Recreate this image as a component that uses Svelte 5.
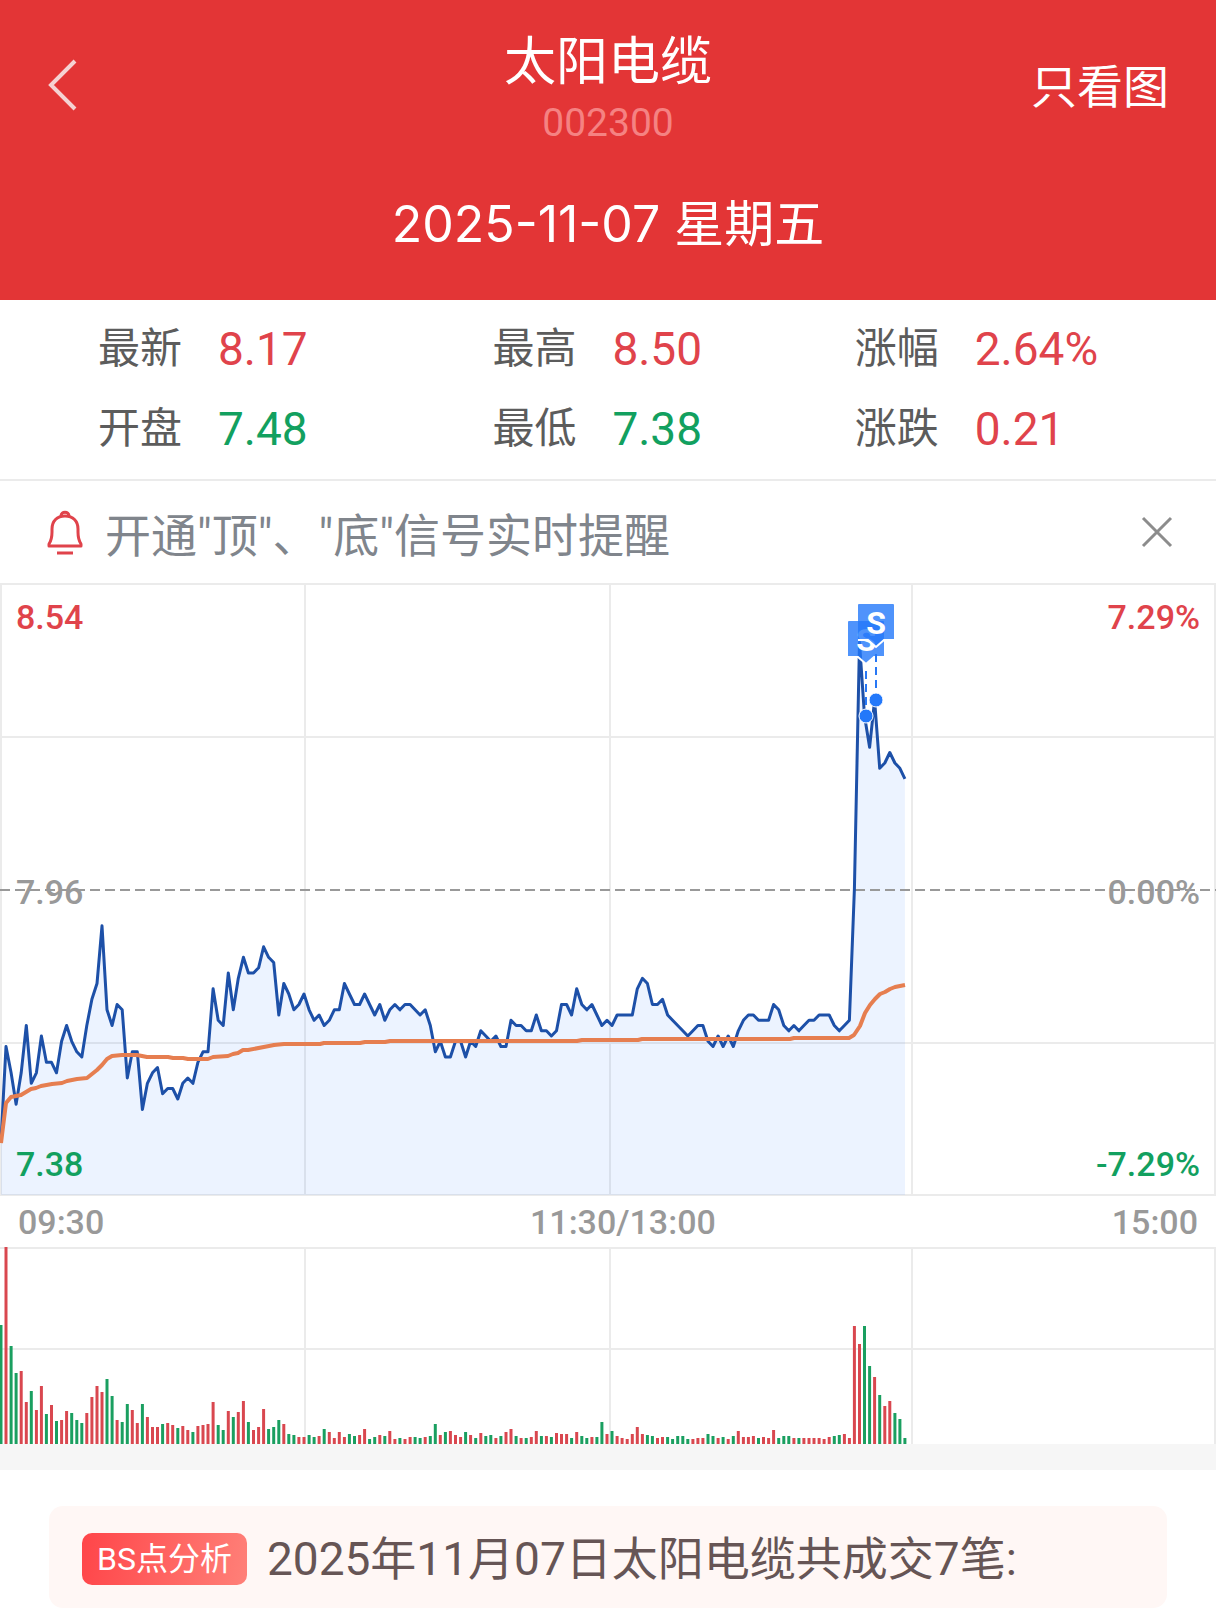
<script lang="ts">
	const quotes = [
		{ label: '最新', value: '8.17', dir: 'up' },
		{ label: '最高', value: '8.50', dir: 'up' },
		{ label: '涨幅', value: '2.64%', dir: 'up' },
		{ label: '开盘', value: '7.48', dir: 'down' },
		{ label: '最低', value: '7.38', dir: 'down' },
		{ label: '涨跌', value: '0.21', dir: 'up' }
	];

	// minute closes, in cents below the previous close (7.96)
	const closes = [
		48, 30, 35, 41, 35, 26, 37, 35, 28, 33, 33, 35, 29, 26, 29, 31, 32, 26, 21, 18,
		7, 23, 26, 22, 23, 36, 31, 31, 42, 37, 35, 34, 39, 38, 38, 40, 37, 36, 37, 33,
		31, 31, 19, 25, 26, 16, 23, 17, 13, 16, 16, 15, 11, 13, 14, 24, 18, 20, 23, 22,
		20, 23, 25, 24, 26, 25, 23, 23, 18, 20, 22, 22, 20, 22, 24, 22, 25, 23, 22, 23,
		22, 22, 23, 24, 23, 26, 31, 29, 32, 32, 29, 29, 32, 29, 30, 27, 28, 29, 28, 30,
		30, 25, 26, 26, 27, 27, 24, 27, 27, 28, 27, 22, 22, 24, 19, 22, 23, 22, 24, 26,
		25, 26, 24, 24, 24, 24, 19, 17, 18, 22, 22, 21, 24, 25, 26, 27, 28, 27, 26, 26,
		29, 30, 28, 30, 28, 30, 27, 25, 24, 24, 25, 25, 25, 22, 23, 26, 27, 26, 27, 26,
		25, 25, 24, 24, 24, 26, 27, 26, 25, 0, -47, -33, -27, -36, -23, -24, -26, -24, -23, -21
	];

	// minute volumes, negative when the minute closed down
	const volumes = [
		-119, 197, -98, -71, 73, 42, -53, 34, 58, -30, 39, -23, 24, 33, -31, -24, -21, 31, 47, 58,
		52, -65, -48, 24, -22, -40, 34, 21, -40, 27, 17, 17, -20, 21, 19, -16, 18, 14, -12, 18,
		19, 20, 42, -19, -14, 33, -27, 32, 43, -22, 14, 17, 35, -15, -17, -24, 20, -10, -9, 7,
		7, -9, -7, 8, -15, 12, 6, 12, 7, -10, -8, 9, 15, -5, -7, 9, -8, 13, 5, -6,
		5, 7, -7, -6, 7, -8, -20, 9, -12, 13, 9, 7, -12, 9, -6, 11, -8, -9, 6, -8,
		12, 15, -8, 6, -6, 7, 13, -8, 8, -7, 11, 10, 10, -6, 12, -8, -6, 7, -7, -22,
		10, -13, 8, 6, 5, 10, 17, 10, -9, -8, 6, 7, -7, -5, -8, -8, -5, 5, 6, 6,
		-10, -8, 6, -7, 5, -8, 13, 7, 7, 8, -6, 7, 6, 14, -6, -8, -8, 6, -6, 6,
		6, 6, 6, 5, 7, -8, -9, 10, 6, 118, 100, -118, -78, 67, -49, 38, 43, -31, -25, -6
	];

	const average = [
		[1, 560], [6, 520], [11, 514], [21, 512], [31, 506], [36, 505], [41, 503], [52, 501],
		[62, 500], [67, 498], [77, 496], [87, 495], [92, 491], [97, 487], [102, 482], [107, 476],
		[112, 473], [122, 472], [137, 472], [147, 474], [168, 474], [173, 475], [183, 475],
		[188, 476], [208, 476], [213, 474], [228, 473], [233, 471], [238, 470], [243, 467],
		[248, 467], [269, 463], [274, 462], [284, 461], [320, 461], [324, 460], [360, 460],
		[365, 459], [385, 459], [390, 458], [577, 458], [582, 457], [638, 457], [642, 456],
		[790, 456], [794, 455], [849, 455], [854, 452], [860, 443], [865, 430], [870, 422],
		[875, 416], [880, 411], [885, 409], [890, 406], [895, 404], [905, 402]
	];

	const signals = [
		{ x: 866, top: 38, dot: 133 },
		{ x: 876, top: 21, dot: 117 }
	];

	const columns = [1, 305, 610, 912, 1215];

	const xAt = (i: number) => +(1 + i * 5.05).toFixed(1);
	const yAt = (cents: number) => +(306 + cents * 5.25).toFixed(1);

	const priceLine = closes.map((c, i) => `${xAt(i)},${yAt(c)}`).join(' ');
	const area = `1,612 ${priceLine} 905,612`;
	const averageLine = average.map((p) => p.join(',')).join(' ');

	let showAlert = $state(true);
</script>

<main class="page">
	<header class="header">
		<div class="nav">
			<button class="back" aria-label="返回">
				<svg width="32" height="56" viewBox="0 0 32 56">
					<path d="M28 4 4 28l24 24" />
				</svg>
			</button>
			<div class="stock">
				<h1>太阳电缆</h1>
				<span class="code">002300</span>
			</div>
			<button class="chart-only">只看图</button>
		</div>
		<time class="date" datetime="2025-11-07">2025-11-07 星期五</time>
	</header>

	<dl class="quotes">
		{#each quotes as q}
			<div class="quote">
				<dt>{q.label}</dt>
				<dd class={q.dir}>{q.value}</dd>
			</div>
		{/each}
	</dl>

	{#if showAlert}
		<div class="alert">
			<svg class="bell" width="38" height="46" viewBox="0 0 38 46">
				<path d="M3 37v-2c2-3 3-7 3-12v-3C6 12 11 7 19 7s13 5 13 13v3c0 5 1 9 3 12v2z" />
				<path d="M15 7c0-5 8-5 8 0M11 44h16" />
			</svg>
			<span class="alert-text">开通"顶"、"底"信号实时提醒</span>
			<button class="close" aria-label="关闭" onclick={() => (showAlert = false)}>
				<svg width="32" height="32" viewBox="0 0 32 32">
					<path d="M2 2l28 28M30 2 2 30" />
				</svg>
			</button>
		</div>
	{/if}

	<svg class="chart" viewBox="0 0 1216 614" role="img" aria-label="分时走势">
		<g class="grid">
			{#each [1, 154, 460, 612] as y}
				<line x1="0" x2="1216" y1={y} y2={y} />
			{/each}
			{#each columns as x}
				<line x1={x} x2={x} y1="0" y2="613" />
			{/each}
		</g>

		<polygon class="area" points={area} />

		<g class="axis">
			<text class="up" x="16" y="46">8.54</text>
			<text class="flat" x="16" y="321">7.96</text>
			<text class="down" x="16" y="593">7.38</text>
			<text class="up" x="1200" y="46" text-anchor="end">7.29%</text>
			<text class="flat" x="1200" y="321" text-anchor="end">0.00%</text>
			<text class="down" x="1200" y="593" text-anchor="end">-7.29%</text>
		</g>

		<line class="base" x1="0" x2="1216" y1="307" y2="307" />
		<polyline class="price" points={priceLine} />
		<polyline class="average" points={averageLine} />

		{#each signals as s}
			<g class="signal">
				<line x1={s.x} x2={s.x} y1={s.top + 50} y2={s.dot} />
				<circle cx={s.x} cy={s.dot} r="7" />
				<path
					class="flag"
					d="M{s.x - 17} {s.top}h34q1 0 1 1v34q0 1-1 1h-9l-8 7-8-7h-9q-1 0-1-1v-34q0-1 1-1z"
				/>
				<path class="flag-edge" d="M{s.x - 18} {s.top + 36}h10l8 7 8-7h10" />
				<text x={s.x} y={s.top + 30} text-anchor="middle">S</text>
			</g>
		{/each}
	</svg>

	<div class="times">
		<span>09:30</span>
		<span>11:30/13:00</span>
		<span>15:00</span>
	</div>

	<svg class="chart" viewBox="0 0 1216 197" role="img" aria-label="成交量">
		<g class="grid">
			<line x1="0" x2="1216" y1="1" y2="1" />
			<line x1="0" x2="1216" y1="102" y2="102" />
			{#each columns.slice(1) as x}
				<line x1={x} x2={x} y1="0" y2="197" />
			{/each}
		</g>
		{#each volumes as v, i}
			<line
				class="bar"
				class:sell={v < 0}
				x1={xAt(i)}
				x2={xAt(i)}
				y1={197 - Math.abs(v)}
				y2="197"
			/>
		{/each}
	</svg>

	<section class="analysis">
		<div class="card">
			<span class="tag">BS点分析</span>
			<p>2025年11月07日太阳电缆共成交7笔:</p>
		</div>
	</section>
</main>

<style>
	:global(body) {
		margin: 0;
		background: #fff;
	}
	.page {
		font-family: Roboto, 'Noto Sans CJK SC', sans-serif;
		color: #5c5c5c;
	}
	button {
		border: none;
		background: none;
		padding: 0;
		font: inherit;
		color: inherit;
		cursor: pointer;
	}
	svg { display: block; }
	.up { color: #e0434b; fill: #e0434b; }
	.down { color: #12a05f; fill: #12a05f; }
	.flat { fill: #999; }

	/* header */
	.header {
		background: #e33536;
		color: #fff;
		padding: 33px 47px 46px;
		text-align: center;
	}
	.nav {
		display: grid;
		grid-template-columns: 1fr auto 1fr;
		align-items: start;
	}
	.back {
		justify-self: start;
		margin-top: 24px;
	}
	.back path {
		fill: none;
		stroke: #f5d2d2;
		stroke-width: 4;
	}
	h1 {
		margin: 0 0 6px;
		font-size: 52px;
		font-weight: 400;
		line-height: 60px;
	}
	.code {
		display: block;
		font-size: 39px;
		line-height: 48px;
		color: #f58282;
	}
	.chart-only {
		justify-self: end;
		margin-top: 24px;
		font-size: 46px;
		line-height: 60px;
	}
	.date {
		display: block;
		margin-top: 47px;
		font-family: Inter, 'Noto Sans CJK SC', sans-serif;
		font-size: 50px;
		line-height: 60px;
	}

	/* quotes */
	.quotes {
		display: grid;
		grid-template-columns: 394fr 362fr 263fr;
		row-gap: 20px;
		margin: 0;
		padding: 19px 98px 20px;
		border-bottom: 2px solid #ebebeb;
	}
	.quote {
		display: flex;
		align-items: center;
		gap: 36px;
		line-height: 60px;
	}
	dt { font-size: 42px; }
	dd {
		margin: 0;
		font-size: 46px;
	}

	/* alert */
	.alert {
		display: flex;
		align-items: center;
		height: 102px;
		padding: 0 43px 0 46px;
	}
	.bell {
		fill: none;
		stroke: #e0434b;
		stroke-width: 3;
		stroke-linejoin: round;
	}
	.alert-text {
		flex: 1;
		margin-left: 21px;
		font-size: 46px;
		color: #80858c;
	}
	.close path {
		stroke: #8c8c8c;
		stroke-width: 3;
	}

	/* charts */
	.chart {
		width: 100%;
		height: auto;
	}
	.grid line {
		stroke: #ebebeb;
		stroke-width: 2;
	}
	.axis text {
		font-size: 34px;
		font-weight: 500;
	}
	.area { fill: rgba(47, 120, 250, 0.09); }
	.base {
		stroke: #999;
		stroke-width: 2;
		stroke-dasharray: 10 5;
	}
	.price,
	.average {
		fill: none;
		stroke: #1d50a8;
		stroke-width: 3;
		stroke-linejoin: round;
	}
	.average {
		stroke: #e67e50;
		stroke-width: 4;
	}
	.bar {
		stroke: #d9474f;
		stroke-width: 3;
	}
	.bar.sell { stroke: #1a9f60; }

	.signal line {
		stroke: #2878f5;
		stroke-width: 2;
		stroke-dasharray: 8 5;
	}
	.signal circle {
		fill: #2378fa;
		stroke: #fff;
		stroke-width: 1;
	}
	.flag {
		fill: #2378fa;
		fill-opacity: 0.8;
	}
	.flag-edge {
		fill: none;
		stroke: #fff;
		stroke-width: 2;
	}
	.signal text {
		font-size: 32px;
		font-weight: 700;
		fill: #fff;
	}

	.times {
		display: grid;
		grid-template-columns: 103fr auto 97fr;
		padding: 0 18px;
		font-size: 34px;
		font-weight: 500;
		line-height: 50px;
		color: #999;
	}
	.times span:last-child { text-align: right; }

	/* analysis */
	.analysis {
		border-top: 26px solid #f6f6f6;
		padding: 36px 49px 11px;
	}
	.card {
		display: flex;
		align-items: center;
		gap: 20px;
		padding: 23px 33px 19px;
		border-radius: 14px;
		background: #fff7f5;
	}
	.tag {
		padding: 0 15px;
		border-radius: 10px;
		background: linear-gradient(100deg, #ff4549, #ff8078);
		color: #fff;
		font-size: 32px;
		line-height: 52px;
	}
	.card p {
		margin: 0;
		font-size: 46px;
		line-height: 60px;
		color: #665555;
	}
</style>
